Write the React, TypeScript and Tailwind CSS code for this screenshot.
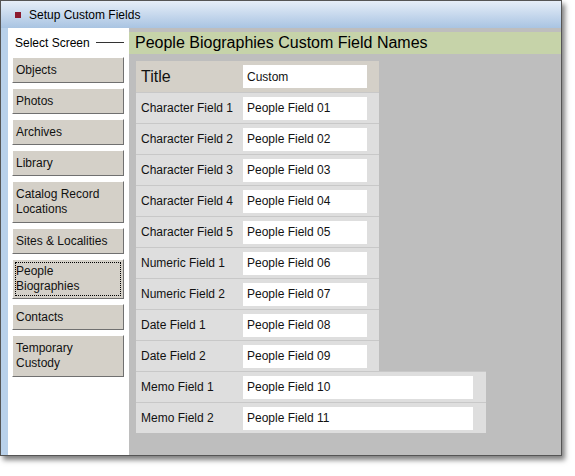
export default function App() {
  const btns: [string, number][] = [["Objects",26],["Photos",26],["Archives",26],["Library",26],["Catalog Record Locations",42],["Sites & Localities",26],["People Biographies",40],["Contacts",26],["Temporary Custody",42]];
  const rows = ["Character Field 1","Character Field 2","Character Field 3","Character Field 4","Character Field 5","Numeric Field 1","Numeric Field 2","Date Field 1","Date Field 2"];
  const f = { fontFamily: '"Liberation Sans", Arial, sans-serif' };
  return (
    <div className="w-[575px] h-[476px] bg-white relative" style={f}>
      <div className="w-[562px] h-[456px] flex flex-col border border-[#555] shadow-[3px_4px_5px_rgba(0,0,0,0.5)]">
        <div className="h-[27px] flex items-center px-[14px] gap-[8px] text-[12px] text-black bg-gradient-to-b from-[#e6eef8] to-[#a9c4e2]">
          <span className="w-[6px] h-[6px] bg-[#8c1a2e]" />
          Setup Custom Fields
        </div>
        <div className="flex flex-1 bg-[#b9d1ea] pl-[7px]">
          <div className="w-[121px] bg-white flex flex-col pl-[4px] pr-[5px]">
            <div className="flex items-center h-[29px] gap-[6px] text-[12px] pl-[3px]">Select Screen<span className="flex-1 h-px bg-[#333]" /></div>
            <div className="flex flex-col gap-[5px]">
              {btns.map(([b, h]) => (
                <div key={b} style={{ height: h }} className={"bg-[#d4d0c8] border border-t-white border-l-white border-b-[#707070] border-r-[#707070] text-[12px] leading-[15px] px-[3px] flex items-center text-[#111] " + (b.startsWith("People") ? "outline outline-1 outline-dotted outline-black -outline-offset-4" : "")}>{b}</div>
              ))}
            </div>
          </div>
          <div className="flex-1 bg-[#bebebe] pt-[4px]">
            <div className="h-[22px] bg-[#c6d3a9] pl-[6px] text-[16px] leading-[22px] text-black">People Biographies Custom Field Names</div>
            <div className="pl-[7px] pt-[7px] text-[12px] text-[#111]">
              <div className="w-[243px]">
                <div className="h-[31px] bg-[#d4d0c8] flex items-center pl-[5px]">
                  <span className="w-[102px] text-[16px]">Title</span>
                  <div className="w-[124px] h-[23px] bg-white flex items-center pl-[4px]">Custom</div>
                </div>
                {rows.map((r, i) => (
                  <div key={r} className="h-[31px] bg-[#dedede] border-t border-[#c8c8c8] flex items-center pl-[5px]">
                    <span className="w-[102px]">{r}</span>
                    <div className="w-[124px] h-[23px] bg-white flex items-center pl-[4px]">People Field {String(i + 1).padStart(2, "0")}</div>
                  </div>
                ))}
              </div>
              <div className="w-[350px]">
                {["Memo Field 1","Memo Field 2"].map((r, i) => (
                  <div key={r} className="h-[31px] bg-[#dedede] border-t border-[#c8c8c8] flex items-center pl-[5px]">
                    <span className="w-[102px]">{r}</span>
                    <div className="w-[230px] h-[23px] bg-white flex items-center pl-[4px]">People Field {10 + i}</div>
                  </div>
                ))}
              </div>
            </div>
          </div>
        </div>
      </div>
    </div>
  );
}
